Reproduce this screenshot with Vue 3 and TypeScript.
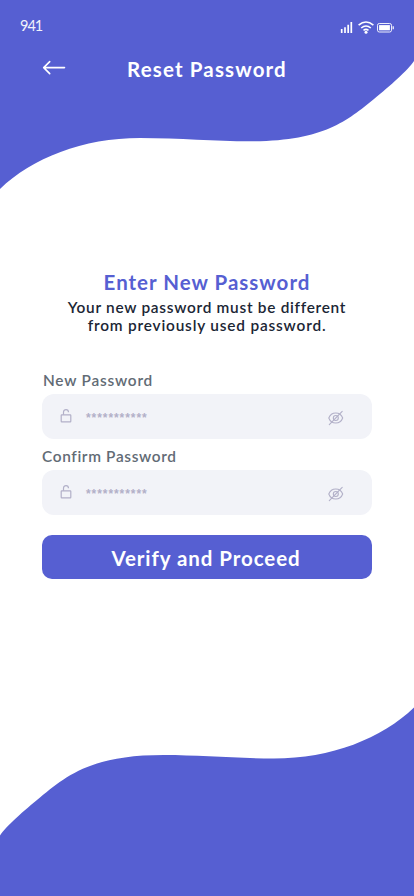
<script setup lang="ts">
import { ref } from 'vue'

interface Field {
  id: string
  label: string
  value: string
}

const wave =
  'M0 0H414V61C408 70 390 86 374 99C347 121 323 141.300 250 141.300C215 141.300 180 138 140 138C83 138 32 158 0 189Z'

const fields = ref<Field[]>([
  { id: 'new', label: 'New Password', value: '***********' },
  { id: 'confirm', label: 'Confirm Password', value: '***********' },
])
</script>

<template>
  <main class="screen">
    <svg class="waves" viewBox="0 0 414 896" aria-hidden="true">
      <path :d="wave" />
      <path transform="rotate(180 207 448.200)" :d="wave" />
    </svg>

    <div class="status">
      <span class="time">941</span>
      <svg class="indicators" viewBox="0 0 54 14" fill="none" stroke="#fff">
        <path d="M1.700 9v4M5 7.200V13M8.200 4.700V13M11.300 2v11" stroke-width="1.700" />
        <path d="M18.600 5.200Q26 -1.200 33.400 5.200M21.200 8Q26 4 30.800 8M23.500 10.300Q26 8.400 28.500 10.300" stroke-width="1.600" />
        <circle cx="26" cy="12.300" r="1.500" fill="#fff" stroke="none" />
        <rect x="37.500" y="3.500" width="14" height="8.500" rx="1.800" stroke-width="1" opacity=".9" />
        <rect x="39.100" y="5.100" width="10.800" height="5.200" fill="#fff" stroke="none" />
        <path d="M53.200 6.200v3" stroke-width="1.200" />
      </svg>
    </div>

    <header class="header">
      <button class="back" type="button" aria-label="Back">
        <svg viewBox="0 0 24 16" fill="none" stroke="#fff" stroke-width="1.600" stroke-linecap="round" stroke-linejoin="round">
          <path d="M22.500 7.600H1.700M7.700 1.600L1.700 7.600L7.700 13.600" />
        </svg>
      </button>
      <h1>Reset Password</h1>
    </header>

    <section class="intro">
      <h2>Enter New Password</h2>
      <p>
        <span class="line">Your new password must be different</span>
        <span class="line second">from previously used password.</span>
      </p>
    </section>

    <form class="form" @submit.prevent>
      <div v-for="field in fields" :key="field.id" class="field" :class="field.id">
        <label>{{ field.label }}</label>
        <div class="input">
          <svg class="lock" viewBox="0 0 12 15" fill="none" stroke="#b2b0c8" stroke-width="1.200">
            <rect x="1.200" y="6.900" width="9.600" height="7" rx=".6" />
            <path d="M3.500 6.800V4.300C3.500 .6 8.500 .6 8.500 4.300" />
          </svg>
          <span class="mask">{{ field.value }}</span>
          <svg class="eye" viewBox="0 0 16 16" fill="none" stroke="#b2b0c8" stroke-width="1.100" stroke-linecap="round">
            <path d="M.8 8C3.300 1.300 12.200 1.300 14.700 8C12.200 14.700 3.300 14.700 .8 8Z" />
            <circle cx="7.800" cy="8" r="2.500" />
            <path d="M14.200 1.300L1.300 14.700" />
          </svg>
        </div>
      </div>
      <button class="submit" type="submit">Verify and Proceed</button>
    </form>
  </main>
</template>

<style>
body {
  margin: 0;
  background: #fff;
}
</style>

<style scoped>
.screen {
  position: relative;
  width: 414px;
  height: 896px;
  overflow: hidden;
  background: #fff;
  font-family: Lato, "Open Sans", sans-serif;
}
.waves {
  position: absolute;
  inset: 0;
  width: 414px;
  height: 896px;
  fill: #565fd2;
}
.status,
.header,
.intro,
.form {
  position: relative;
}
.status {
  display: flex;
  justify-content: space-between;
  height: 40px;
  padding: 16px 20px 0;
  box-sizing: border-box;
}
.time {
  font: 400 14.500px/20px Lato, sans-serif;
  letter-spacing: -1px;
  color: #fff;
  opacity: .92;
}
.indicators {
  width: 54px;
  height: 14px;
  margin-top: 4px;
}
.header {
  display: flex;
  align-items: center;
  height: 56px;
  padding-left: 42px;
}
.back {
  display: flex;
  width: 24px;
  padding: 0;
  margin-top: -1px;
  border: 0;
  background: none;
}
.back svg {
  width: 24px;
  height: 16px;
}
h1,
h2,
p {
  margin: 0;
}
h1 {
  margin: 2px 0 0 61px;
  color: #fff;
  font-size: 20.500px;
  line-height: 24px;
  font-weight: 700;
  letter-spacing: 1.150px;
  white-space: nowrap;
}
.intro {
  margin-top: 174px;
  text-align: center;
  white-space: nowrap;
}
h2 {
  color: #565fd2;
  font-size: 20.500px;
  line-height: 24px;
  font-weight: 700;
  letter-spacing: 1px;
}
p {
  margin-top: 4px;
  color: #1b2635;
  font-size: 15.400px;
  line-height: 18px;
  font-weight: 600;
  letter-spacing: .720px;
}
.second {
  letter-spacing: .820px;
}
.line {
  display: block;
}
.form {
  display: flex;
  flex-direction: column;
  margin: 37px 42px 0;
}
.field {
  height: 76px;
}
label {
  display: block;
  height: 23px;
  color: #626b75;
  font-size: 15.400px;
  line-height: 18px;
  font-weight: 600;
  letter-spacing: .780px;
}
.new label {
  padding-left: 1px;
}
.confirm label {
  letter-spacing: .650px;
}
.input {
  display: flex;
  align-items: center;
  height: 45px;
  padding: 0 28px 0 18px;
  box-sizing: border-box;
  border-radius: 12px;
  background: #f2f3f8;
}
.lock {
  width: 12px;
  height: 15px;
  margin-top: -2px;
}
.mask {
  margin-left: 14px;
  padding-top: 3px;
  color: #b2b0c8;
  font: 700 12px/14px "Liberation Sans", sans-serif;
  letter-spacing: .930px;
}
.eye {
  width: 16px;
  height: 16px;
  margin: 3px 0 0 auto;
}
.submit {
  height: 44px;
  margin-top: 12px;
  padding: 1px 2px 0 0;
  border: 0;
  border-radius: 10px;
  background: #565fd2;
  color: #fff;
  font: 700 20.500px/24px Lato, sans-serif;
  letter-spacing: .930px;
}
</style>
